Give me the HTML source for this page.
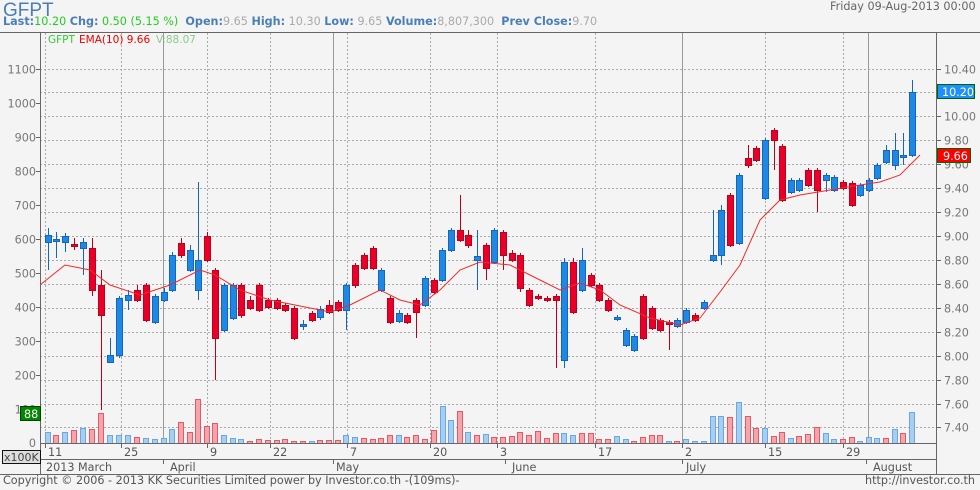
<!DOCTYPE html><html><head><meta charset="utf-8"><style>
body{margin:0;background:#f4f4f4;width:980px;height:490px;overflow:hidden;font-family:"DejaVu Sans","Liberation Sans",sans-serif;}
.t{position:absolute;white-space:nowrap}
</style></head><body>
<div class="t" style="left:3px;top:0px;font-size:19px;color:#4a7fb5;font-family:'Liberation Sans',sans-serif">GFPT</div>
<div class="t" style="left:3px;top:15px;font-size:11.2px;color:#4a7fb5"><b>Last:</b><span style="color:#2c2">10.20</span> <b>Chg:</b> <span style="color:#2c2">0.50 (5.15 %)</span>&nbsp; <b>Open:</b><span style="color:#aaa">9.65</span> <b>High:</b> <span style="color:#aaa">10.30</span> <b>Low:</b> <span style="color:#aaa">9.65</span> <b>Volume:</b><span style="color:#aaa">8,807,300</span> &nbsp;<b>Prev Close:</b><span style="color:#aaa">9.70</span></div>
<div class="t" style="left:830px;top:0px;font-size:11.2px;color:#666">Friday 09-Aug-2013 00:00</div>
<svg id="s" width="980" height="490" style="position:absolute;left:0;top:0" font-family="DejaVu Sans, Liberation Sans, sans-serif"></svg>
<div class="t" style="left:3px;top:474px;font-size:11.2px;color:#555">Copyright © 2006 - 2013 KK Securities Limited power by Investor.co.th -(109ms)-</div>
<div class="t" style="left:865px;top:474px;font-size:11.2px;color:#555">http://investor.co.th</div>
<script>
var s='';
function L(x1,y1,x2,y2,c,d,w){s+='<line x1="'+x1+'" y1="'+y1+'" x2="'+x2+'" y2="'+y2+'" stroke="'+c+'" stroke-width="'+(w||1)+'"'+(d?' stroke-dasharray="2,2"':'')+'/>';}
function T(x,y,t,c,a,sz){s+='<text x="'+x+'" y="'+y+'" fill="'+c+'" font-size="'+(sz||11.2)+'"'+(a?' text-anchor="'+a+'"':'')+'>'+t+'</text>';}
for(var i=0;i<=15;i++){var y=68.5+i*23.93;y=Math.round(y)+.5;L(40,y,936,y,'#aaa',1);L(936,y,941,y,'#666');T(944,y+4,(10.4-i*0.2).toFixed(2),'#777');}
var lv=[1100,1000,900,800,700,600,500,400,300,200,100];
lv.forEach(function(v,i){var y=69.5+i*34;T(36,y+4,v,'#777','end');L(36,y,40,y,'#666');});
T(36,447,'0','#777','end');
var days=[[45,'11'],[121,'25'],[207,'9'],[270,'22'],[347,'7'],[430,'20'],[497,'3'],[595,'17'],[682,'2'],[765,'15'],[843,'29']];
days.forEach(function(d){L(d[0]+.5,33,d[0]+.5,443,'#aaa',1);L(d[0]+.5,443,d[0]+.5,448,'#666');T(d[0]+3,456,d[1],'#555');});
[163,333,682,868].forEach(function(x){L(x+.5,33,x+.5,443,'#999');});
[[44,'2013 March',0],[168,'April',163],[334,'May',333],[510,'June',505],[684,'July',682],[871,'August',866]].forEach(function(m){if(m[2])L(m[2]+.5,459,m[2]+.5,464,'#666');T(m[0]+2,471,m[1],'#555');});
var vb=[[48,10,1],[56,7,0],[65,10,1],[74,12,0],[83,14,1],[92,13,0],[101,29,0],[110,7,1],[119,7,1],[128,7,1],[137,5,0],[146,4,1],[155,3,1],[164,4,1],[172,13,1],[181,20,0],[190,10,0],[198,43,0],[207,16,0],[215,19,0],[224,7,1],[233,4,1],[241,3,1],[250,1,0],[259,3,0],[268,2,0],[277,2,0],[285,3,0],[294,1,0],[303,1,0],[312,1,1],[320,2,0],[329,2,0],[338,2,0],[346,7,1],[355,5,1],[364,4,0],[373,3,0],[381,4,0],[390,7,0],[399,7,1],[407,5,0],[416,7,0],[425,3,0],[434,12,0],[443,36,1],[451,22,1],[460,31,0],[468,10,1],[477,7,0],[486,8,1],[494,5,0],[503,5,0],[512,6,0],[520,10,0],[529,7,0],[538,11,0],[547,4,0],[556,9,0],[564,9,1],[573,7,1],[582,9,0],[591,9,0],[599,3,0],[608,3,0],[617,6,1],[626,3,1],[634,1,0],[643,5,0],[652,7,0],[660,7,0],[669,1,1],[677,1,0],[686,3,1],[695,1,1],[704,1,1],[713,26,1],[721,26,1],[730,25,0],[739,40,1],[748,26,0],[756,14,0],[765,14,1],[774,6,0],[782,10,0],[791,4,1],[799,6,0],[808,8,0],[817,15,0],[826,9,1],[834,3,1],[843,3,0],[852,5,0],[860,1,1],[869,5,1],[877,4,1],[886,4,0],[895,13,1],[903,9,0],[912,30,1]];
vb.forEach(function(b){var h=b[1]+1;s+='<rect x="'+(b[0]-3)+'.5" y="'+(443-h)+'.5" width="5" height="'+h+'" fill="'+(b[2]?'#a6cdf2':'#f6a3aa')+'" stroke="'+(b[2]?'#6aa8e0':'#e05a6a')+'"/>';});
var c=[[48,235,242,1,228,270],[56,239,241,1,232,258],[65,236,242,1,233,252],[74,244,246,0,238,250],[83,242,248,1,238,275],[92,248,290,0,238,296],[101,285,315,0,270,410],[110,355,362,1,338,362],[119,298,355,1,296,358],[128,295,300,1,290,310],[137,290,300,0,285,302],[146,285,320,0,283,322],[155,296,322,1,294,324],[164,292,300,1,288,302],[172,255,290,1,252,292],[181,243,255,0,238,258],[190,250,270,1,245,272],[198,260,290,1,182,300],[207,236,260,0,232,262],[215,270,338,0,268,380],[224,285,330,1,283,332],[233,285,318,1,283,320],[241,285,315,0,283,318],[250,300,308,0,296,310],[259,285,310,0,283,312],[268,300,307,0,298,309],[277,300,308,0,298,310],[285,305,310,0,303,312],[294,308,338,0,306,340],[303,324,326,1,320,330],[312,313,320,0,311,322],[320,309,317,1,306,320],[329,305,312,0,300,314],[338,302,310,0,300,312],[346,285,310,1,283,330],[355,265,285,0,263,288],[364,255,268,0,253,270],[373,248,268,0,246,270],[381,270,290,1,268,292],[390,298,322,0,296,324],[399,313,321,1,310,323],[407,315,322,0,313,324],[416,300,312,0,298,338],[425,278,305,1,276,307],[434,280,292,0,278,294],[442,250,280,1,248,282],[451,230,250,1,228,252],[460,230,240,0,195,242],[468,235,245,0,230,248],[477,256,260,1,230,290],[486,245,268,0,243,280],[494,230,262,1,228,264],[503,232,255,0,230,270],[512,253,260,0,250,262],[520,255,288,0,253,292],[529,290,305,0,288,307],[538,296,298,0,294,300],[547,298,300,0,296,302],[556,296,300,0,294,368],[564,262,360,1,258,368],[573,262,312,0,258,314],[582,260,290,1,248,292],[591,275,285,0,273,287],[599,285,300,0,283,302],[608,300,310,0,298,312],[617,317,319,1,315,321],[626,330,345,1,328,347],[634,336,350,1,334,352],[643,296,338,0,294,340],[652,308,328,0,306,330],[660,320,330,0,318,332],[669,322,324,0,320,350],[677,320,326,1,318,328],[686,310,322,1,308,324],[695,315,320,0,313,322],[704,302,308,1,300,310],[713,255,260,1,210,262],[721,210,255,1,205,265],[730,195,245,0,193,247],[739,175,243,1,173,245],[748,158,165,0,145,168],[756,148,160,0,146,162],[765,140,198,1,138,200],[774,130,140,0,128,170],[782,146,200,0,144,202],[791,180,192,1,178,194],[799,180,190,1,178,192],[808,170,185,0,168,187],[817,170,190,0,168,212],[826,175,180,1,173,192],[834,177,190,1,175,192],[843,182,188,0,180,190],[852,183,205,0,181,207],[860,185,195,1,183,197],[869,180,190,1,178,192],[877,165,178,1,163,180],[886,150,162,1,145,164],[895,150,165,1,133,170],[903,155,157,1,133,165],[912,92,155,1,80,157]];
c.forEach(function(d){var col=d[3]?'#1e88e5':'#e8002a';L(d[0]+.5,d[4],d[0]+.5,d[5],d[3]?'#1565c0':'#c00018');s+='<rect x="'+(d[0]-3)+'.5" y="'+d[1]+'.5" width="6" height="'+Math.max(1,d[2]-d[1])+'" fill="'+col+'" stroke="'+(d[3]?'#1565c0':'#c00018')+'"/>';});
var e=[[40,285],[65,265],[90,270],[110,285],[140,295],[170,285],[200,270],[215,275],[240,290],[270,300],[300,306],[330,312],[350,305],[380,290],[400,300],[420,305],[440,290],[460,270],[480,262],[510,265],[540,280],[560,290],[580,283],[600,290],[620,305],[650,318],[680,325],[700,318],[720,292],[740,265],[760,220],[780,200],[800,195],[830,190],[860,185],[880,182],[900,175],[920,155]];
s+='<polyline fill="none" stroke="#ee2a2a" stroke-width="1" points="'+e.map(function(p){return p.join(',')}).join(' ')+'"/>';
L(0,32.5,980,32.5,'#666');L(40.5,32,40.5,474,'#666');L(936.5,32,936.5,474,'#666');L(40,443.5,936,443.5,'#666');L(40,459.5,936,459.5,'#666');L(0,474.5,980,474.5,'#666');
T(48,43,'GFPT','#3c3',0,10.5);T(79,43,'EMA(10) 9.66','#e00',0,10.5);T(156,43,'V:88.07','#8c8',0,10.5);
s+='<rect x="937.5" y="84.5" width="37" height="14" fill="#1e90ff" stroke="#060"/>';T(942,96,'10.20','#fff');
s+='<rect x="937.5" y="148.5" width="33" height="14" fill="#f00" stroke="#060"/>';T(943,160,'9.66','#fff');
s+='<rect x="20.5" y="406.5" width="20" height="14" fill="#080" stroke="#040"/>';T(24,418,'88','#fff');
s+='<rect x="2.5" y="450.5" width="38" height="13" fill="#ddd" stroke="#111"/>';T(4,461,'x100K','#444',0,11);
document.getElementById('s').innerHTML=s;
</script>
</body></html>
